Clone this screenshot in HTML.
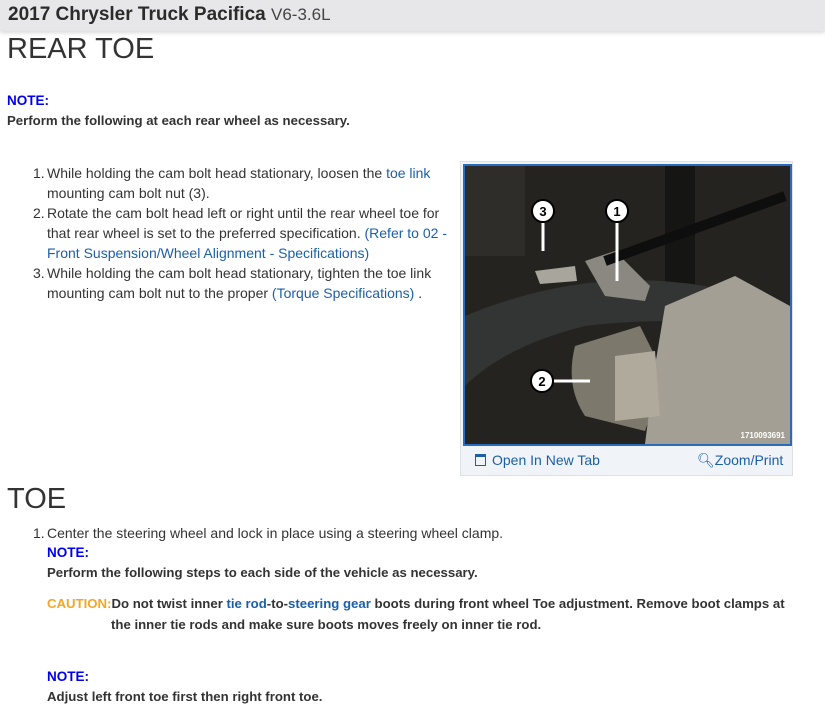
<!DOCTYPE html>
<html><head><meta charset="utf-8"><style>
body{margin:0;width:825px;height:727px;overflow:hidden;background:#fff;font-family:"Liberation Sans",Arial,sans-serif;color:#333;position:relative}
.hdr{position:absolute;left:0;top:0;width:825px;height:31px;background:#e7e7e9;box-shadow:0 2px 4px rgba(0,0,0,.15)}
.hdr b{position:absolute;left:8px;top:4px;font-size:19px;color:#2b2b2b}
.hdr span{font-weight:normal;font-size:17px;color:#444}
.a{position:absolute;white-space:nowrap;font-size:14px;line-height:20px}
.h{position:absolute;font-size:29px;color:#333;font-weight:300}
.n{color:#0000ee;font-weight:bold;font-size:13.5px}
.bd{font-weight:bold;font-size:13.2px}
.l{color:#1c5fa8}
.c{color:#f5a623;font-weight:bold}
</style></head><body>
<div class="hdr"><b>2017 Chrysler Truck Pacifica <span>V6-3.6L</span></b></div>
<div class="h" style="left:7px;top:33px">REAR TOE</div>
<div class="a n" style="left:7px;top:91px">NOTE:</div>
<div class="a bd" style="left:7px;top:111px">Perform the following at each rear wheel as necessary.</div>
<div class="a" style="left:33px;top:163px">1.</div>
<div class="a" style="left:47px;top:163px">While holding the cam bolt head stationary, loosen the <span class="l">toe link</span><br>mounting cam bolt nut (3).</div>
<div class="a" style="left:33px;top:203px">2.</div>
<div class="a" style="left:47px;top:203px">Rotate the cam bolt head left or right until the rear wheel toe for<br>that rear wheel is set to the preferred specification. <span class="l">(Refer to 02 -</span><br><span class="l">Front Suspension/Wheel Alignment - Specifications)</span></div>
<div class="a" style="left:33px;top:263px">3.</div>
<div class="a" style="left:47px;top:263px">While holding the cam bolt head stationary, tighten the toe link<br>mounting cam bolt nut to the proper <span class="l">(Torque Specifications)</span> .</div>

<div style="position:absolute;left:460px;top:161px;width:333px;height:315px;background:#f0f3f7;border:1px solid #e0e0e0;box-sizing:border-box"></div>
<div style="position:absolute;left:463px;top:164px;width:329px;height:282px;border:2px solid #2a6bbf;box-sizing:border-box;overflow:hidden;background:#1c1c1a">
<svg width="325" height="278" viewBox="0 0 325 278">
<rect width="325" height="278" fill="#24231f"/>
<rect x="0" y="0" width="60" height="90" fill="#2e2d29"/>
<rect x="200" y="0" width="30" height="160" fill="#151514"/>
<path d="M0 150 Q120 100 240 120 L300 130 L300 160 Q200 150 120 160 Q40 180 0 220Z" fill="#333534"/>
<path d="M120 95 L150 85 L185 120 L180 135 L140 130Z" fill="#8a8880"/>
<path d="M70 105 L110 100 L112 115 L75 118Z" fill="#a8a59c"/>
<path d="M110 180 L175 160 L200 210 L180 265 L120 250 Q100 220 110 180Z" fill="#7d786c"/>
<path d="M200 140 L270 110 L325 140 L325 278 L180 278 L190 200Z" fill="#a39f94"/>
<path d="M150 190 L190 185 L195 250 L150 255Z" fill="#b0aa9c"/>
<path d="M140 95 L320 30" stroke="#0e0e0e" stroke-width="10"/>
<circle cx="78" cy="45" r="11" fill="#fff" stroke="#000" stroke-width="2"/><text x="78" y="50" font-size="13" font-weight="bold" text-anchor="middle" font-family="Liberation Sans">3</text>
<circle cx="152" cy="45" r="11" fill="#fff" stroke="#000" stroke-width="2"/><text x="152" y="50" font-size="13" font-weight="bold" text-anchor="middle" font-family="Liberation Sans">1</text>
<circle cx="77" cy="215" r="11" fill="#fff" stroke="#000" stroke-width="2"/><text x="77" y="220" font-size="13" font-weight="bold" text-anchor="middle" font-family="Liberation Sans">2</text>
<path d="M78 57 V85 M152 57 V115 M89 215 H125" stroke="#fff" stroke-width="3"/>
<text x="320" y="272" font-size="8" font-weight="bold" fill="#fff" text-anchor="end" font-family="Liberation Sans">1710093691</text>
</svg></div>
<div class="a" style="left:475px;top:450px;color:#1c5fa8;font-size:14px"><span style="display:inline-block;width:9px;height:8px;border:1.5px solid #1c5fa8;border-top-width:3px;margin-right:6px;vertical-align:-1px"></span>Open In New Tab</div>
<div class="a" style="left:697px;top:450px;color:#1c5fa8;font-size:14px"><span style="font-size:14px">&#x1F50D;&#xFE0E;</span>Zoom/Print</div>

<div class="h" style="left:7px;top:483px">TOE</div>
<div class="a" style="left:33px;top:523px">1.</div>
<div class="a" style="left:47px;top:523px">Center the steering wheel and lock in place using a steering wheel clamp.</div>
<div class="a n" style="left:47px;top:543px">NOTE:</div>
<div class="a bd" style="left:47px;top:563px">Perform the following steps to each side of the vehicle as necessary.</div>
<div class="a bd" style="left:47px;top:594px"><span class="c">CAUTION:</span>Do not twist inner <span class="l">tie rod</span>-to-<span class="l">steering gear</span> boots during front wheel Toe adjustment. Remove boot clamps at</div>
<div class="a bd" style="left:111px;top:615px">the inner tie rods and make sure boots moves freely on inner tie rod.</div>
<div class="a n" style="left:47px;top:667px">NOTE:</div>
<div class="a bd" style="left:47px;top:687px">Adjust left front toe first then right front toe.</div>
</body></html>
